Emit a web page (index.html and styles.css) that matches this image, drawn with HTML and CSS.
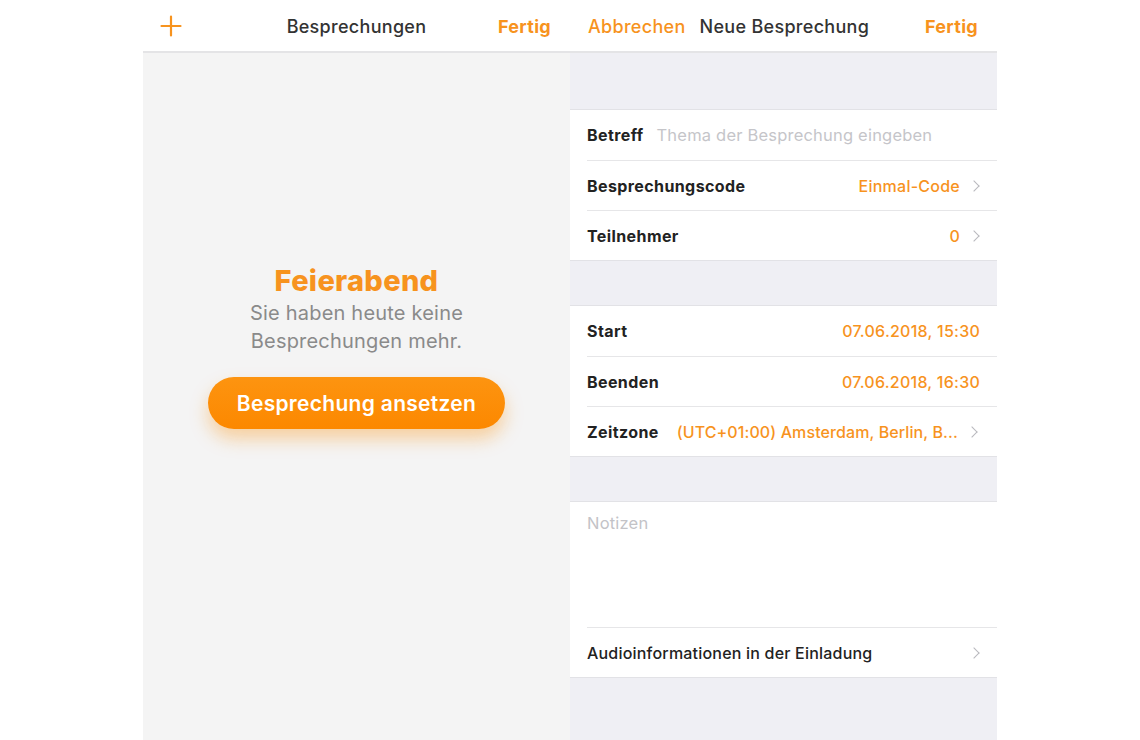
FILE: index.html
```html
<!DOCTYPE html>
<html lang="de">
<head>
<meta charset="utf-8">
<title>Besprechungen</title>
<link rel="stylesheet" href="styles.css">
</head>
<body>
<div class="screen">
  <section class="pane pane-left">
    <header class="nav">
      <span class="nav-side nav-left">
        <svg class="plus" width="22" height="22" viewBox="0 0 22 22"><path d="M11 1.5v19M1.5 11h19" stroke="#f7931e" stroke-width="2.2" stroke-linecap="round" fill="none"/></svg>
      </span>
      <span class="nav-title">Besprechungen</span>
      <span class="nav-side nav-right action-bold">Fertig</span>
    </header>
    <div class="empty">
      <h1 class="empty-title">Feierabend</h1>
      <p class="empty-text">Sie haben heute keine<br>Besprechungen mehr.</p>
      <button class="cta">Besprechung ansetzen</button>
    </div>
  </section>
  <section class="pane pane-right">
    <header class="nav nav-form">
      <span class="action">Abbrechen</span>
      <span class="nav-title form-title">Neue Besprechung</span>
      <span class="action-bold push">Fertig</span>
    </header>
    <div class="form">
      <div class="group">
        <div class="row"><span class="label">Betreff</span><span class="placeholder">Thema der Besprechung eingeben</span></div>
        <div class="row"><span class="label">Besprechungscode</span><span class="value">Einmal-Code</span><span class="chev"></span></div>
        <div class="row"><span class="label">Teilnehmer</span><span class="value">0</span><span class="chev"></span></div>
      </div>
      <div class="group">
        <div class="row"><span class="label">Start</span><span class="value">07.06.2018, 15:30</span></div>
        <div class="row"><span class="label">Beenden</span><span class="value">07.06.2018, 16:30</span></div>
        <div class="row"><span class="label">Zeitzone</span><span class="value tz">(UTC+01:00) Amsterdam, Berlin, B...</span><span class="chev"></span></div>
      </div>
      <div class="group">
        <div class="notes">Notizen</div>
        <div class="row"><span class="label regular">Audioinformationen in der Einladung</span><span class="chev"></span></div>
      </div>
    </div>
  </section>
</div>
</body>
</html>
```
FILE: styles.css
```css
* { box-sizing: border-box; margin: 0; padding: 0; }
html, body { height: 100%; }
body {
  background: #ffffff;
  font-family: "Inter", "Liberation Sans", sans-serif;
  color: #222;
}
.screen {
  width: 854px;
  height: 740px;
  margin: 0 auto;
  display: grid;
  grid-template-columns: 427px 427px;
}
.pane { display: flex; flex-direction: column; height: 740px; }
.pane-left { background: #f4f4f4; }
.pane-right { background: #efeff4; }

.nav {
  height: 53px;
  background: #fff;
  border-bottom: 2px solid #e4e4e6;
  display: flex;
  align-items: center;
  position: relative;
  padding: 2px 19px 0 17px;
  font-size: 18px;
  letter-spacing: 0.3px;
}
.nav-left { display: flex; align-items: center; }
.plus { display: block; margin-top: -2px; }
.nav-title {
  position: absolute;
  left: 0; right: 0;
  text-align: center;
  color: #333;
  font-weight: 500;
  pointer-events: none;
}
.nav-right { margin-left: auto; }
.action { color: #f7931e; font-weight: 500; }
.action-bold { color: #f7931e; font-weight: 700; }
.push { margin-left: auto; }
.nav-form { padding: 2px 19px 0 18px; }
.form-title { position: static; text-align: left; margin-left: 14px; color: #333; }

.empty {
  flex: 1;
  display: flex;
  flex-direction: column;
  align-items: center;
  padding-top: 211px;
}
.empty-title {
  color: #f7931e;
  font-size: 29px;
  font-weight: 800;
  line-height: 34px;
  letter-spacing: 0.3px;
}
.empty-text {
  color: #8a8a8a;
  font-size: 20px;
  line-height: 28px;
  letter-spacing: 0.2px;
  text-align: center;
  margin-top: 1px;
}
.cta {
  margin-top: 22px;
  width: 297px;
  height: 52px;
  border: 0;
  border-radius: 26px;
  background: linear-gradient(#fd9410, #fc8800);
  color: #fff;
  font-family: inherit;
  font-size: 21px;
  font-weight: 600;
  letter-spacing: 0.3px;
  box-shadow: 0 10px 18px rgba(252, 140, 0, 0.35);
}

.form { padding-top: 56px; display: flex; flex-direction: column; gap: 44px; }
.group {
  background: #fff;
  border-top: 1px solid #e2e2e6;
  border-bottom: 1px solid #e2e2e6;
  padding-left: 17px;
}
.row {
  height: 50px;
  display: flex;
  align-items: center;
  padding-right: 17px;
  font-size: 16px;
  border-top: 1px solid #e6e6e8;
}
.group > .row:first-child { border-top: 0; }
.label { font-weight: 700; color: #222; letter-spacing: 0.4px; }
.label.regular { font-weight: 500; letter-spacing: 0.2px; }
.placeholder { color: #c5c5c9; margin-left: 13px; font-weight: 400; font-size: 16.5px; letter-spacing: 0.2px; }
.value { margin-left: auto; color: #f7931e; font-weight: 500; letter-spacing: 0.25px; }
.value.tz { margin-left: 18px; white-space: nowrap; letter-spacing: 0.1px; }
.chev {
  width: 10px;
  height: 13px;
  margin-left: 10px;
  position: relative;
}
.chev::before {
  content: "";
  position: absolute;
  left: 0; top: 3px;
  width: 7px; height: 7px;
  border-right: 1.6px solid #b8b8bd;
  border-top: 1.6px solid #b8b8bd;
  transform: rotate(45deg);
}
.row .label.regular + .chev { margin-left: auto; }
.notes {
  height: 125px;
  padding-top: 11px;
  color: #c3c3c7;
  font-size: 16.5px;
  letter-spacing: 0.2px;
}
```
